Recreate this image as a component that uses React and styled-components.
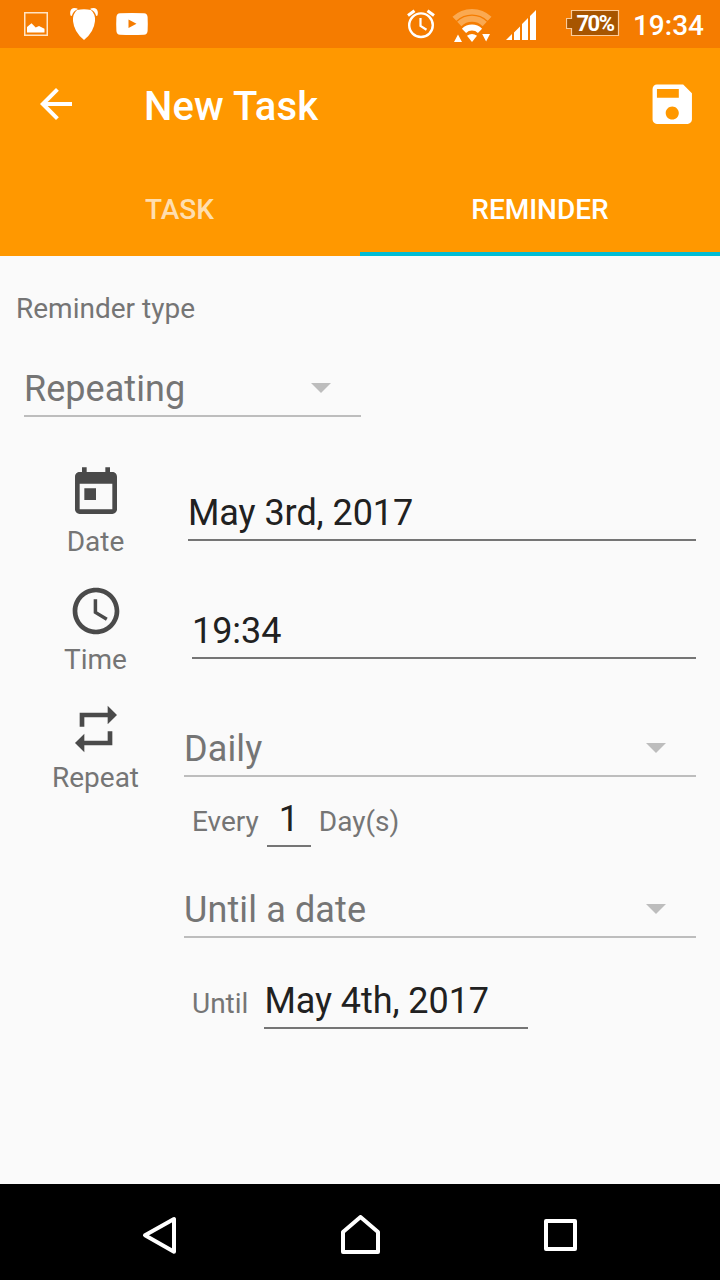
import React from 'react';
import styled, { createGlobalStyle } from 'styled-components';

const GlobalStyle = createGlobalStyle`
  * { box-sizing: border-box; }
  body { margin: 0; background: #fafafa; font-family: Roboto, "Liberation Sans", sans-serif; }
  svg { display: block; flex: none; }
`;

const Screen = styled.div`
  width: 720px;
  height: 1280px;
  display: flex;
  flex-direction: column;
  background: #fafafa;
`;

const StatusBar = styled.div`
  height: 48px;
  flex: none;
  display: flex;
  justify-content: space-between;
  padding: 0 16px 0 24px;
  background: #f57c00;
`;

const StatusGroup = styled.div`
  display: flex;
  gap: ${(p) => p.$gap || 0}px;
`;

const StatusTime = styled.span`
  margin-left: 13px;
  font-size: 28px;
  font-weight: 500;
  line-height: 51px;
  color: #fff;
`;

const Battery = styled.div`
  display: grid;
  width: 54px;
  height: 48px;
  margin-left: 30px;

  & > * { grid-area: 1 / 1; }
`;

const BatteryLevel = styled.span`
  padding-left: 10.5px;
  font-size: 22px;
  font-weight: 700;
  letter-spacing: -1.5px;
  line-height: 47px;
  color: #fff;
`;

const AppBar = styled.header`
  height: 112px;
  flex: none;
  display: flex;
  align-items: center;
  padding: 0 22px 0 32px;
  background: #ff9800;
`;

const Title = styled.h1`
  flex: 1;
  margin: 5px 0 0 64px;
  font-size: 40px;
  font-weight: 500;
  line-height: 48px;
  letter-spacing: 0.1px;
  color: #fff;
`;

const Tabs = styled.nav`
  height: 96px;
  flex: none;
  display: grid;
  grid-template-columns: 1fr 1fr;
  background: #ff9800;
`;

const Tab = styled.div`
  border-bottom: 4px solid ${(p) => (p.$active ? '#00bcd4' : 'transparent')};
  padding: 3px ${(p) => (p.$active ? 0 : 1)}px 0 0;
  text-align: center;
  font-size: 28px;
  font-weight: 500;
  line-height: 93px;
  height: 96px;
  color: ${(p) => (p.$active ? '#fff' : 'rgba(255, 255, 255, 0.7)')};
`;

const Form = styled.main`
  flex: 1;
  padding: 36px 24px 0;
`;

const Label = styled.div`
  font-size: 28px;
  line-height: 33px;
  color: #757575;
  white-space: nowrap;
`;

const TypeLabel = styled(Label)`
  margin-left: -8px;
`;

const IconLabel = styled(Label)`
  padding-right: 1px;
`;

const Field = styled.div`
  display: flex;
  justify-content: ${(p) => (p.$center ? 'center' : 'space-between')};
  width: ${(p) => (p.$width ? `${p.$width}px` : 'auto')};
  height: 49px;
  padding-bottom: 5px;
  border-bottom: 2px solid #757575;
  font-size: 36px;
  line-height: 42px;
  letter-spacing: -0.07px;
  color: #212121;
  white-space: nowrap;
`;

const SelectField = styled(Field)`
  padding-right: 30px;
  border-color: #bdbdbd;
  letter-spacing: 0.12px;
  color: #757575;
`;

const TypeSelect = styled(SelectField)`
  margin-top: 43px;
  letter-spacing: 0.04px;
`;

const Caret = styled.svg`
  margin-top: 15px;
`;

const Rows = styled.div`
  margin-top: 48px;
`;

const Row = styled.section`
  display: flex;
  height: 118px;
`;

const IconCell = styled.div`
  width: 144px;
  flex: none;
  display: flex;
  flex-direction: column;
  align-items: center;
  gap: 4px;
`;

const Value = styled.div`
  flex: 1;
  padding: 27px 0 0 ${(p) => p.$indent}px;
`;

const Inline = styled.div`
  display: flex;
  align-items: baseline;
  gap: ${(p) => p.$gap}px;
  margin-top: ${(p) => p.$top}px;
  padding-left: 8px;
`;

const UntilSelect = styled(SelectField)`
  margin-top: 42px;
`;

const NavBar = styled.footer`
  height: 96px;
  flex: none;
  display: grid;
  grid-template-columns: repeat(3, 200px);
  justify-content: center;
  background: #000;
`;

const NavButton = styled.div`
  display: flex;
  justify-content: center;
  align-items: center;
  padding-top: 6px;
`;

const Glyph = ({ size, color = '#4a4a4a', d }) => (
  <svg width={size} height={size} viewBox="0 0 24 24" fill={color}>
    <path d={d} />
  </svg>
);

const paths = {
  back: 'M20 11H7.83l5.59-5.59L12 4l-8 8 8 8 1.41-1.41L7.83 13H20v-2z',
  save: 'M17 3H5c-1.11 0-2 .9-2 2v14c0 1.1.89 2 2 2h14c1.1 0 2-.9 2-2V7l-4-4zm-5 16c-1.66 0-3-1.34-3-3s1.34-3 3-3 3 1.34 3 3-1.34 3-3 3zm3-10H5V5h10v4z',
  today: 'M19 3h-1V1h-2v2H8V1H6v2H5c-1.11 0-1.99.9-1.99 2L3 19c0 1.1.89 2 2 2h14c1.1 0 2-.9 2-2V5c0-1.1-.9-2-2-2zm0 16H5V8h14v11zM7 10h5v5H7z',
  clock: 'M11.99 2C6.47 2 2 6.48 2 12s4.47 10 9.99 10C17.52 22 22 17.52 22 12S17.52 2 11.99 2zM12 20c-4.42 0-8-3.58-8-8s3.58-8 8-8 8 3.58 8 8-3.58 8-8 8zm.5-13H11v6l5.25 3.15.75-1.23-4.5-2.67z',
  repeat: 'M7 7h10v3l4-4-4-4v3H5v6h2V7zm10 10H7v-3l-4 4 4 4v-3h12v-6h-2v4z',
};

const PictureIcon = () => (
  <svg width="24" height="48" viewBox="0 0 24 48">
    <rect x="0.75" y="12.75" width="22.5" height="22.5" fill="none" stroke="#ffe3c4" strokeWidth="1.5" />
    <path d="M3 32.5V27l4.5-3.7 4.2 4.2 3.3-1.5 5.5 2.8v3.7z" fill="#fff" />
  </svg>
);

const BearIcon = () => (
  <svg width="28" height="48" viewBox="0 0 28 48" fill="#fff">
    <path d="M7 10Q14 8.500 21 10Q25.500 14 25 21Q24 32 14 40Q4 32 3 21Q2.500 14 7 10Z" />
    <path d="M0.500 15.500Q-1 9 4 8Q7 8 8 9Q3 11 1.800 16Z" />
    <path d="M27.500 15.500Q29 9 24 8Q21 8 20 9Q25 11 26.200 16Z" />
  </svg>
);

const VideoIcon = () => (
  <svg width="32" height="48" viewBox="0 0 32 48">
    <path fillRule="evenodd" fill="#fff" d="M4 13.200Q16 12.600 28 13.200Q31.300 13.500 31.600 17Q32 24 31.600 31Q31.300 34.500 28 34.800Q16 35.300 4 34.800Q.7 34.500 .4 31Q0 24 .4 17Q.7 13.500 4 13.200ZM12.500 19.500V28L20.500 23.800Z" />
  </svg>
);

const AlarmIcon = () => (
  <svg width="28" height="48" viewBox="0 0 28 48" fill="none" stroke="#fff">
    <circle cx="14" cy="25.200" r="11.800" strokeWidth="2.400" />
    <path d="M13.500 18V26L19.500 29.800" strokeWidth="2.200" />
    <path d="M1 15.500L7.500 10.700M27 15.500L20.500 10.700" strokeWidth="3" />
  </svg>
);

const WifiIcon = () => (
  <svg width="40" height="48" viewBox="0 0 40 48" fill="#fff">
    <g fill="none" stroke="#fff">
      <path d="M2.400 18.800A25.500 25.500 0 0 1 37.600 18.800" stroke="#faa951" strokeWidth="5.500" />
      <path d="M7.300 24A18 18 0 0 1 32.700 24" stroke="#faa951" strokeWidth="6" />
      <path d="M12 30.800A11.500 11.500 0 0 1 28 30.800" strokeWidth="6" />
    </g>
    <path d="M15 35.700Q20 32.500 25 35.700L20 42Z" />
    <path d="M2 42L6 34.500L10 42ZM30.200 34H38L34.100 41.500Z" />
  </svg>
);

const SignalIcon = () => (
  <svg width="30" height="48" viewBox="0 0 30 48" fill="#fff">
    <path d="M0 40L6 34V40ZM8 32.500L14 26.500V40H8ZM16 24L22 18V40H16ZM24 16L30 10V40H24Z" />
  </svg>
);

const BatteryShape = () => (
  <svg width="54" height="48" viewBox="0 0 54 48">
    <path d="M5.500 10.500H52.500V35.500H5.500V28.500H0.500V18.500H5.500Z" fill="#a75500" stroke="#fbcb9a" strokeWidth="1.200" />
  </svg>
);

const Arrow = () => (
  <Caret width="20" height="10" viewBox="0 0 20 10">
    <path d="M0 0H20L10 10Z" fill="#bdbdbd" />
  </Caret>
);

const Select = ({ as: Box = SelectField, width, children }) => (
  <Box $width={width}>
    <span>{children}</span>
    <Arrow />
  </Box>
);

const FormRow = ({ icon, label, indent, children }) => (
  <Row>
    <IconCell>
      <Glyph size={56} d={paths[icon]} />
      <IconLabel>{label}</IconLabel>
    </IconCell>
    <Value $indent={indent}>{children}</Value>
  </Row>
);

export default function App() {
  return (
    <Screen>
      <GlobalStyle />
      <StatusBar>
        <StatusGroup $gap={18}>
          <StatusGroup $gap={22}>
            <PictureIcon />
            <BearIcon />
          </StatusGroup>
          <VideoIcon />
        </StatusGroup>
        <StatusGroup>
          <StatusGroup $gap={14}>
            <StatusGroup $gap={17}>
              <AlarmIcon />
              <WifiIcon />
            </StatusGroup>
            <SignalIcon />
          </StatusGroup>
          <Battery>
            <BatteryShape />
            <BatteryLevel>70%</BatteryLevel>
          </Battery>
          <StatusTime>19:34</StatusTime>
        </StatusGroup>
      </StatusBar>

      <AppBar>
        <Glyph size={48} color="#fff" d={paths.back} />
        <Title>New Task</Title>
        <Glyph size={52.5} color="#fff" d={paths.save} />
      </AppBar>
      <Tabs>
        <Tab>TASK</Tab>
        <Tab $active>REMINDER</Tab>
      </Tabs>

      <Form>
        <TypeLabel>Reminder type</TypeLabel>
        <Select as={TypeSelect} width={337}>Repeating</Select>
        <Rows>
          <FormRow icon="today" label="Date" indent={20}>
            <Field>May 3rd, 2017</Field>
          </FormRow>
          <FormRow icon="clock" label="Time" indent={24}>
            <Field>19:34</Field>
          </FormRow>
          <FormRow icon="repeat" label="Repeat" indent={16}>
            <Select>Daily</Select>
            <Inline $gap={8} $top={21}>
              <Label>Every</Label>
              <Field $width={44} $center>1</Field>
              <Label>Day(s)</Label>
            </Inline>
            <Select as={UntilSelect}>Until a date</Select>
            <Inline $gap={16} $top={42}>
              <Label>Until</Label>
              <Field $width={264}>May 4th, 2017</Field>
            </Inline>
          </FormRow>
        </Rows>
      </Form>

      <NavBar>
        <NavButton>
          <svg width="36" height="40" viewBox="0 0 36 40" fill="none" stroke="#fff" strokeWidth="4" strokeLinejoin="round">
            <path d="M32 4V36.700L3 20.300Z" />
          </svg>
        </NavButton>
        <NavButton>
          <svg width="40" height="40" viewBox="0 0 40 40" fill="none" stroke="#fff" strokeWidth="4" strokeLinejoin="round">
            <path d="M3 37V17L20.500 2L38 17V37Z" />
          </svg>
        </NavButton>
        <NavButton>
          <svg width="34" height="34" viewBox="0 0 34 34" fill="none" stroke="#fff" strokeWidth="4" strokeLinejoin="round">
            <path d="M3 3H32V31H3Z" />
          </svg>
        </NavButton>
      </NavBar>
    </Screen>
  );
}
